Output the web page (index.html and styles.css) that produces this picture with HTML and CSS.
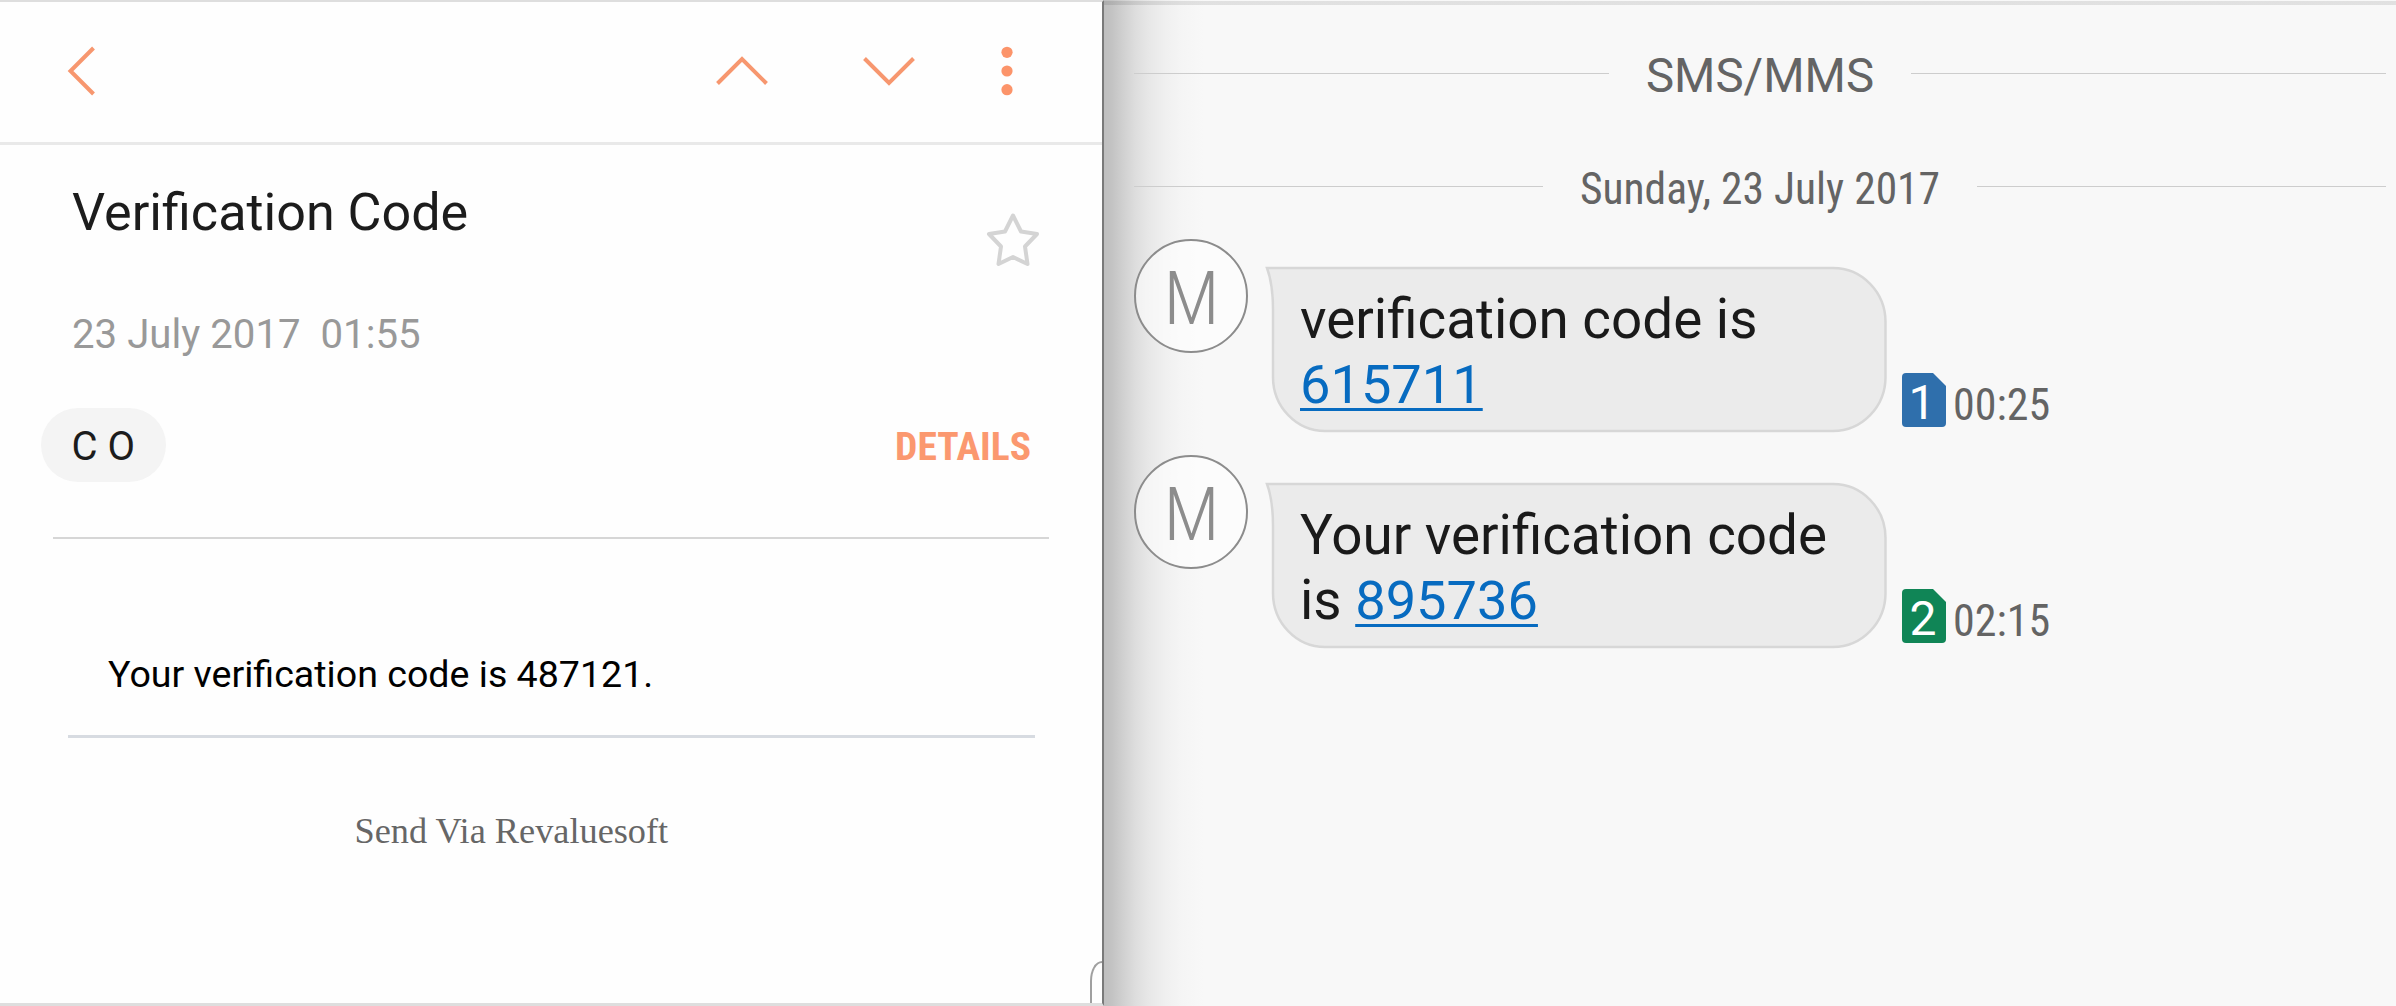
FILE: index.html
```
<!DOCTYPE html>
<html lang="en">
<head>
<meta charset="utf-8">
<title>Verification Code</title>
<link rel="stylesheet" href="styles.css">
</head>
<body>
<div class="screen">
  <section class="mail">
    <header class="toolbar">
      <svg class="icon-back" width="36" height="60" viewBox="0 0 36 60"><path d="M30.5 7 7.5 30 30.5 53"/></svg>
      <div class="toolbar-actions">
        <svg width="60" height="40" viewBox="0 0 60 40"><path d="M5.500 32.500 30 8 54.500 32.500"/></svg>
        <svg width="60" height="40" viewBox="0 0 60 40"><path d="M5.500 7.500 30 32 54.500 7.500"/></svg>
        <svg class="icon-more" width="14" height="60" viewBox="0 0 14 60"><circle cx="7" cy="11.300" r="5.600"/><circle cx="7" cy="30" r="5.600"/><circle cx="7" cy="48.700" r="5.600"/></svg>
      </div>
    </header>
    <div class="subject">
      <div>
        <h1>Verification Code</h1>
        <time class="sent">23 July 2017&nbsp; 01:55</time>
      </div>
      <svg class="star" width="56" height="56" viewBox="0 0 56 56"><path d="M28 4.500 36 20.500 52 23 40 35.500 42.500 53 28 46 13.500 53 16 35.500 4 23 20 20.500Z"/></svg>
    </div>
    <div class="people">
      <span class="chip">C O</span>
      <a class="details">DETAILS</a>
    </div>
    <hr class="rule">
    <p class="body-text">Your verification code is 487121.</p>
    <hr class="rule rule-inner">
    <p class="signature">Send Via Revaluesoft</p>
    <span class="corner"></span>
  </section>
  <section class="chat">
    <div class="divider"><span class="divider-sms">SMS/MMS</span></div>
    <div class="divider divider-day"><span>Sunday, 23 July 2017</span></div>
    <div class="message">
      <span class="avatar">M</span>
      <div class="bubble">
        <svg class="bubble-shape" width="624" height="168" viewBox="0 0 624 168"><path d="M2 2H568A52.500 54 0 0 1 620.500 56V111A52.500 54 0 0 1 568 165H60A52 54 0 0 1 8 111V44Q8 18 2 2Z"/></svg>
        <p>verification code is<br><a>615711</a></p>
      </div>
      <div class="meta">
        <svg class="sim" width="44" height="54" viewBox="0 0 44 54"><path fill="#2f6fac" d="M4 0H31L44 13V50Q44 54 40 54H4Q0 54 0 50V4Q0 0 4 0Z"/><text x="20" y="46">1</text></svg>
        <time>00:25</time>
      </div>
    </div>
    <div class="message">
      <span class="avatar">M</span>
      <div class="bubble">
        <svg class="bubble-shape" width="624" height="168" viewBox="0 0 624 168"><path d="M2 2H568A52.500 54 0 0 1 620.500 56V111A52.500 54 0 0 1 568 165H60A52 54 0 0 1 8 111V44Q8 18 2 2Z"/></svg>
        <p>Your verification code<br>is <a>895736</a></p>
      </div>
      <div class="meta">
        <svg class="sim" width="44" height="54" viewBox="0 0 44 54"><path fill="#108556" d="M4 0H31L44 13V50Q44 54 40 54H4Q0 54 0 50V4Q0 0 4 0Z"/><text x="21" y="45.500">2</text></svg>
        <time>02:15</time>
      </div>
    </div>
  </section>
</div>
</body>
</html>
```
FILE: styles.css
```
* { box-sizing: border-box; }

body {
  margin: 0;
  font-family: Roboto, "Liberation Sans", sans-serif;
  color: #1c1c1c;
}

h1, p, hr { margin: 0; }

.screen {
  display: flex;
  width: 2396px;
  height: 1006px;
  overflow: hidden;
}

/* Mail pane */
.mail {
  position: relative;
  width: 1104px;
  border-top: 2px solid #dedede;
  border-right: 2px solid #7a7a7a;
  border-bottom: 3px solid #dedede;
  background: #fefefe;
}

.toolbar {
  display: flex;
  align-items: center;
  justify-content: space-between;
  height: 143px;
  padding: 0 88px 2px 63px;
  border-bottom: 3px solid #e9e9e9;
}

.toolbar svg {
  display: block;
  fill: none;
  stroke: #f7976f;
  stroke-width: 4;
}

.toolbar-actions {
  display: flex;
  align-items: center;
  gap: 87px;
}

.toolbar .icon-more {
  margin-left: -6px;
  fill: #fc946a;
  stroke: none;
}

.subject {
  display: flex;
  justify-content: space-between;
  height: 263px;
  padding: 38px 61px 0 72px;
}

h1 {
  font-size: 52.1px;
  font-weight: 400;
  line-height: 60px;
}

.sent {
  display: block;
  margin-top: 68px;
  font-size: 40.2px;
  line-height: 48px;
  color: #999;
}

.star {
  margin-top: 28px;
  fill: none;
  stroke: #d4d4d4;
  stroke-width: 4;
  stroke-linejoin: round;
}

.people {
  display: flex;
  justify-content: space-between;
  height: 74px;
  padding: 0 71px 0 41px;
}

.chip {
  width: 125px;
  padding: 2px 0 0 30.500px;
  border-radius: 37px;
  background: #f4f4f4;
  font-size: 40px;
  line-height: 74px;
}

.details {
  padding-top: 2px;
  font: 700 39.6px/74px "Roboto Condensed", Roboto, sans-serif;
  color: #fb986f;
}

.rule {
  height: 2px;
  margin: 55px 53px 0;
  border: 0;
  background: #d6d6d6;
}

.body-text {
  margin: 113px 0 0 108px;
  font-size: 37.6px;
  line-height: 44px;
  color: #000;
}

.rule-inner {
  height: 3px;
  margin: 39px 67px 0 68px;
  background: #d7dbe1;
}

.signature {
  margin: 71px 0 0 354.500px;
  font: 36.3px/44px "Liberation Serif", serif;
  color: #666;
}

.corner {
  position: absolute;
  right: 0;
  bottom: 0;
  width: 12px;
  height: 42px;
  border: 2px solid #a0a0a0;
  border-width: 2px 0 0 2px;
  border-radius: 12px 0 0 0 / 20px 0 0 0;
}

/* Chat pane */
.chat {
  width: 1292px;
  padding: 5px 10px 0 30px;
  background:
    linear-gradient(#e7e7e7, #e7e7e7) 0 1px / 100% 4px no-repeat,
    linear-gradient(90deg, #bfbfbf 0, #c3c3c3 8px, #cfcfcf 18px, #dedede 32px, #e8e8e8 46px, #f0f0f0 62px, #f5f5f5 78px, #f8f8f8 100px);
  background-blend-mode: multiply;
}

.divider {
  display: flex;
  align-items: center;
  gap: 37px;
  height: 136px;
  color: #646464;
  font: 47.4px/60px Roboto, sans-serif;
}

.divider::before,
.divider::after {
  content: "";
  flex: 1;
  height: 1px;
  background: #cdcdcd;
}

.divider span { padding-top: 6px; }

.divider-day {
  height: 90px;
  font: 43.5px/60px "Roboto Condensed", Roboto, sans-serif;
}

.divider-day span { padding-top: 7px; }

.message {
  display: flex;
  height: 216px;
  color: #1a1a1a;
}

.avatar {
  width: 114px;
  height: 114px;
  padding: 2px 0 0 1px;
  margin-top: 8px;
  border: 2px solid #8c8c8c;
  border-radius: 50%;
  background: rgba(255, 255, 255, .6);
  font: 300 75px/110px "Roboto Condensed", Roboto, sans-serif;
  text-align: center;
  color: #8c8c8c;
}

.bubble {
  position: relative;
  width: 624px;
  height: 168px;
  margin: 35px 0 0 17px;
  padding: 21px 0 0 35px;
}

.bubble-shape {
  position: absolute;
  inset: 0;
  fill: #ebebeb;
  stroke: #d7d7d7;
  stroke-width: 2.500;
}

.bubble p {
  position: relative;
  font-size: 54.8px;
  line-height: 64.800px;
  white-space: nowrap;
}

.bubble a {
  font-size: 54.2px;
  color: #076bc0;
  text-decoration: underline 2.500px;
  text-underline-offset: 5px;
  text-decoration-skip-ink: none;
}

.meta {
  display: flex;
  gap: 7px;
  height: 54px;
  margin: 142px 0 0 13px;
}

.meta time {
  padding-top: 5px;
  font: 44px/54px "Roboto Condensed", Roboto, sans-serif;
  color: #646464;
}

.sim { overflow: visible; }

.sim text {
  fill: #fff;
  font: 48px Roboto, sans-serif;
  text-anchor: middle;
}
```
